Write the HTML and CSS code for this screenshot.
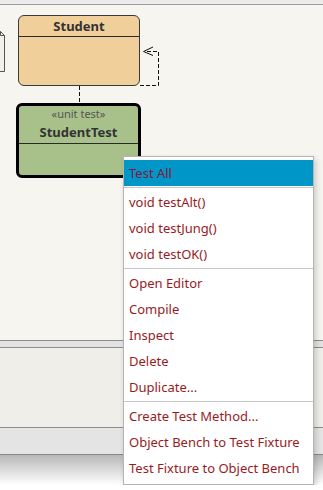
FILE: index.html
```html
<!DOCTYPE html>
<html lang='en'>
<head>
  <meta charset='utf-8' />
  <title>BlueJ</title>
  <link rel="stylesheet" href="styles.css">
</head>
<body>
  <div class="topbar"></div>
  <div class="canvas">
    <svg class="edges" width="323" height="335">
      <path class="readme" d="M-2 26.5 H0.5 L4.5 30.5 V66.5 H-2 Z" />
      <path class="fold" d="M0.5 26.5 V30.5 H4.5" />
      <path class="dash" d="M79.5 81 V98" />
      <path class="dash" d="M140 80.5 H158.5 V46.5 H145" />
      <path class="head" d="M153 42 L143.5 46.5 L153 50.5" />
    </svg>
    <div class="cls student">
      <div class="cls-head"><b>Student</b></div>
    </div>
    <div class="cls test">
      <div class="cls-head">
        <span class="stereo">«unit test»</span>
        <b>StudentTest</b>
      </div>
    </div>
  </div>
  <div class="split"></div>
  <div class="bench"></div>
  <div class="status"></div>
  <div class="shade"></div>

  <ul class="menu">
    <li class="active">Test All</li>
    <li class="sep"></li>
    <li>void testAlt()</li>
    <li>void testJung()</li>
    <li>void testOK()</li>
    <li class="sep"></li>
    <li>Open Editor</li>
    <li>Compile</li>
    <li>Inspect</li>
    <li>Delete</li>
    <li>Duplicate...</li>
    <li class="sep"></li>
    <li>Create Test Method...</li>
    <li>Object Bench to Test Fixture</li>
    <li>Test Fixture to Object Bench</li>
  </ul>
</body>
</html>
```

FILE: styles.css
```css
body {
  margin: 0;
  background: #ffffff;
  font-family: "Noto Sans", "Open Sans", sans-serif;
  position: relative;
}
.topbar {
  height: 4px;
  background: #ececec;
  border-bottom: 1px solid #9d9d9d;
}
.canvas {
  height: 335px;
  position: relative;
  overflow: hidden;
  background: #f6f5f0;
  border-bottom: 1px solid #8c8c8c;
}
.split {
  height: 6px;
  background: #e3e3e3;
  border-bottom: 1px solid #8c8c8c;
}
.bench {
  height: 79px;
  background: #efeee9;
  border-bottom: 1px solid #8c8c8c;
}
.status {
  height: 26px;
  background: #e4e4e4;
  border-bottom: 1px solid #888888;
}
.shade {
  height: 30px;
  background: linear-gradient(#b8b8b8, #ffffff);
}

/* diagram */
.edges {
  position: absolute;
  left: 0;
  top: 0;
}
.edges .readme {
  fill: #f1f0ea;
  stroke: #555555;
  stroke-width: 1;
}
.edges .fold {
  fill: none;
  stroke: #555555;
  stroke-width: 1;
}
.edges .dash {
  fill: none;
  stroke: #111111;
  stroke-width: 1;
  stroke-dasharray: 4 2;
}
.edges .head {
  fill: none;
  stroke: #111111;
  stroke-width: 1;
}
.cls {
  position: absolute;
  box-sizing: border-box;
  border-radius: 6px;
  color: #333333;
  text-align: center;
}
.cls b {
  display: block;
  font-size: 13px;
}
.student {
  left: 18px;
  top: 10px;
  width: 122px;
  height: 71px;
  background: #f0cf9a;
  border: 1px solid #3a3a3a;
}
.student .cls-head {
  height: 20px;
  line-height: 21px;
  border-bottom: 1px solid #2a2a2a;
}
.test {
  left: 16px;
  top: 98px;
  width: 125px;
  height: 75px;
  background: #a8c18a;
  border: 3px solid #000000;
}
.test .cls-head {
  height: 37px;
  border-bottom: 1px solid #2a2a2a;
}
.stereo {
  display: block;
  font-size: 11px;
  line-height: 16px;
  color: #555555;
}
.test b {
  line-height: 20px;
}

/* context menu */
.menu {
  position: absolute;
  left: 123px;
  top: 156px;
  width: 191px;
  box-sizing: border-box;
  margin: 0;
  padding: 3px 0;
  list-style: none;
  background: #ffffff;
  border: 1px solid #b4b4b4;
  box-shadow: 2px 3px 6px rgba(0, 0, 0, 0.18);
}
.menu li {
  height: 26px;
  line-height: 27px;
  padding-left: 5px;
  font-size: 13px;
  color: #981b1e;
  white-space: nowrap;
}
.menu li.active {
  background: #0096c8;
  color: #86163a;
}
.menu li.sep {
  height: 1px;
  margin: 1px 0;
  padding: 0;
  background: #c8c8c8;
}
```
